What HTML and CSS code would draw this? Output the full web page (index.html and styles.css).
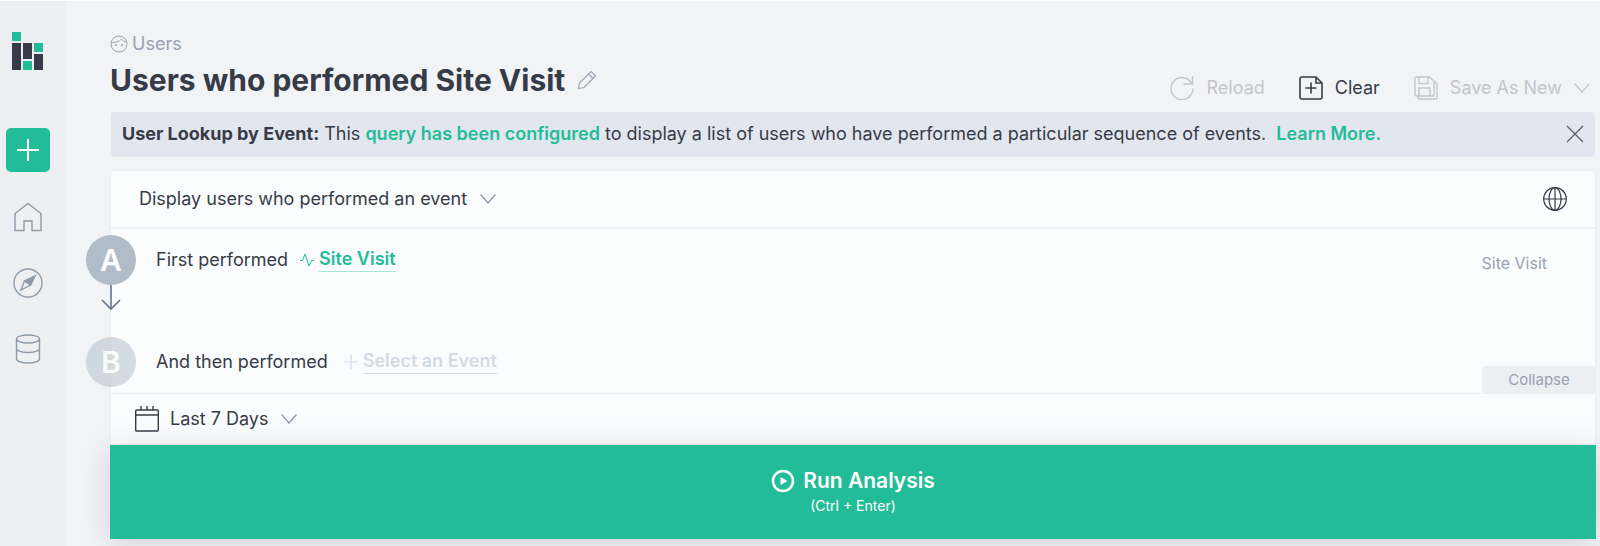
FILE: index.html
```html
<!DOCTYPE html>
<html lang="en">
<head>
  <meta charset="UTF-8">
  <meta name="viewport" content="width=device-width, initial-scale=1">
  <title>Users who performed Site Visit</title>
  <link rel="stylesheet" href="styles.css">
</head>
<body>
  <div class="app">
    <nav class="sidebar" aria-label="Main">
      <a class="logo" href="#" aria-label="Dashboard">
        <svg width="32" height="38" viewBox="0 0 32 38">
          <g fill="#22bd98">
            <rect x="0" y="0" width="9" height="9"/>
            <rect x="22" y="11" width="9" height="9"/>
            <rect x="11" y="29" width="9" height="9"/>
          </g>
          <g fill="#373b47">
            <rect x="0" y="11" width="9" height="27"/>
            <rect x="11" y="11" width="9" height="16"/>
            <rect x="22" y="22" width="9" height="16"/>
          </g>
        </svg>
      </a>
      <button class="add-btn" type="button" aria-label="New query">
        <svg width="22" height="22" viewBox="0 0 22 22" fill="none" stroke="#fff" stroke-width="2"><path d="M11 0v22M0 11h22"/></svg>
      </button>
      <a class="nav-link" href="#" aria-label="Home">
        <svg width="30" height="30" viewBox="0 0 30 30" fill="none" stroke="#8f9bab" stroke-width="1.4"><path d="M2 11.500 15 1.500l13 10V28.500h-9V19h-8v9.500H2z"/></svg>
      </a>
      <a class="nav-link" href="#" aria-label="Explore">
        <svg width="30" height="30" viewBox="0 0 30 30" fill="none" stroke="#8f9bab" stroke-width="1.4">
          <circle cx="15" cy="15" r="14"/>
          <path d="M22 8l-4.500 9L8 22l3.500-9z"/>
          <path d="M22 8l-4.500 9-6-4z" fill="#8f9bab"/>
        </svg>
      </a>
      <a class="nav-link" href="#" aria-label="Data">
        <svg width="30" height="30" viewBox="0 0 30 30" fill="none" stroke="#8f9bab" stroke-width="1.4">
          <ellipse cx="15" cy="5" rx="11.500" ry="4"/>
          <path d="M3.500 5v20c0 2.200 5 4 11.500 4s11.500-1.800 11.500-4V5M3.500 14.500c0 2.200 5 4 11.500 4s11.500-1.800 11.500-4"/>
        </svg>
      </a>
    </nav>

    <main class="main">
      <header class="page-header">
        <div class="heading">
          <a class="breadcrumb" href="#">
            <svg width="18" height="18" viewBox="0 0 18 18" fill="none" stroke="#98a2b3">
              <circle cx="9" cy="9" r="8"/>
              <path d="M1.500 7C5 8 9 7 11.500 4c1 1.800 3 2.800 5 3"/>
              <circle cx="6" cy="10" r=".6" fill="#98a2b3"/>
              <circle cx="12" cy="10" r=".6" fill="#98a2b3"/>
            </svg>
            Users
          </a>
          <div class="title-row">
            <h1>Users who performed Site Visit</h1>
            <button class="icon-btn" type="button" aria-label="Rename">
              <svg width="20" height="20" viewBox="0 0 20 20" fill="none" stroke="#98a2b3" stroke-width="1.2"><path d="M1.500 18.500l1-5.500L14 1.500l4.500 4.500L7 17.500zM11.500 4l4.500 4.500"/></svg>
            </button>
          </div>
        </div>
        <div class="actions">
          <button class="action" type="button" disabled>
            <svg width="24" height="24" viewBox="0 0 24 24" fill="none" stroke="currentColor" stroke-width="1.4"><path d="M22.500 0v8h-9M22 8A11 11 0 1 0 23 12.500"/></svg>
            Reload
          </button>
          <button class="action" type="button">
            <svg width="24" height="24" viewBox="0 0 24 24" fill="none" stroke="currentColor" stroke-width="1.6"><path d="M17 1H3a2 2 0 0 0-2 2v18a2 2 0 0 0 2 2h18a2 2 0 0 0 2-2V7zM17 1v6h6M12 6.500v11M6.500 12h11"/></svg>
            Clear
          </button>
          <button class="action save" type="button" disabled>
            <svg width="24" height="24" viewBox="0 0 24 24" fill="none" stroke="currentColor" stroke-width="1.4"><path d="M15.500 1H2.500A1.500 1.500 0 0 0 1 2.500v16A1.500 1.500 0 0 0 2.500 20h16a1.500 1.500 0 0 0 1.500-1.500V5zM5 1v6.500h9V1M5 20v-8h11v8M4 20v1.500A1.500 1.500 0 0 0 5.500 23h16a1.500 1.500 0 0 0 1.500-1.500V8l-3-3"/></svg>
            Save As New
            <svg class="chevron" width="16" height="10" viewBox="0 0 16 10" fill="none" stroke="currentColor" stroke-width="1.2"><path d="M.5.5 8 9 15.500.5"/></svg>
          </button>
        </div>
      </header>

      <section class="banner">
        <p><strong>User Lookup by Event:</strong> This <a href="#">query has been configured</a> to display a list of users who have performed a particular sequence of events.&nbsp; <a href="#">Learn More.</a></p>
        <button class="icon-btn" type="button" aria-label="Dismiss">
          <svg width="18" height="18" viewBox="0 0 18 18" fill="none" stroke="#5b616e" stroke-width="1.3"><path d="M1 1l16 16M17 1L1 17"/></svg>
        </button>
      </section>

      <section class="query">
        <div class="query-top">
          <label class="dropdown">
            <select aria-label="Query type">
              <option>Display users who performed an event</option>
            </select>
            <svg class="chevron" width="16" height="10" viewBox="0 0 16 10" fill="none" stroke="#8f9bab" stroke-width="1.4"><path d="M.5.5 8 9 15.500.5"/></svg>
          </label>
          <button class="icon-btn" type="button" aria-label="Time zone">
            <svg width="24" height="24" viewBox="0 0 24 24" fill="none" stroke="#373b47" stroke-width="1.2"><circle cx="12" cy="12" r="11.300"/><ellipse cx="12" cy="12" rx="6" ry="11.300"/><path d="M12 .7v22.600M.7 12h22.600"/></svg>
          </button>
        </div>

        <div class="steps">
          <div class="step">
            <div class="marker">
              <span class="badge">A</span>
              <svg width="20" height="26" viewBox="0 0 20 26" fill="none" stroke="#66758a" stroke-width="1.6"><path d="M10 0v24M1 15l9 9 9-9"/></svg>
            </div>
            <div class="step-body">
              <span>First performed</span>
              <button class="event" type="button">
                <svg width="14" height="14" viewBox="0 0 14 14" fill="none" stroke="#22bd98"><path d="M0 7.500h2.500L5 1l4 12 2.500-5.500H14"/></svg>
                <span class="event-name">Site Visit</span>
              </button>
            </div>
            <span class="step-note">Site Visit</span>
          </div>
          <div class="step">
            <div class="marker">
              <span class="badge next">B</span>
            </div>
            <div class="step-body wide">
              <span>And then performed</span>
              <button class="event empty" type="button">
                <svg width="14" height="14" viewBox="0 0 14 14" fill="none" stroke="#d3dae4" stroke-width="1.2"><path d="M7 0v14M0 7h14"/></svg>
                <span class="event-name">Select an Event</span>
              </button>
            </div>
          </div>
          <button class="collapse" type="button">Collapse</button>
        </div>

        <div class="date-row">
          <svg width="24" height="26" viewBox="0 0 24 26" fill="none" stroke="#373b47" stroke-width="1.4"><rect x=".7" y="4" width="22.600" height="21" rx="1"/><path d="M.7 9h22.600M6 0v4M12 0v4M18 0v4"/></svg>
          <label class="dropdown">
            <select aria-label="Date range">
              <option>Last 7 Days</option>
            </select>
            <svg class="chevron" width="16" height="10" viewBox="0 0 16 10" fill="none" stroke="#8f9bab" stroke-width="1.4"><path d="M.5.5 8 9 15.500.5"/></svg>
          </label>
        </div>
      </section>

      <button class="run" type="button">
        <span class="run-label">
          <svg width="24" height="24" viewBox="0 0 24 24" fill="none"><circle cx="12" cy="12" r="10" stroke="#fff" stroke-width="2.500"/><path d="M9.500 8l7 4-7 4z" fill="#fff"/></svg>
          Run Analysis
        </span>
        <span class="run-hint">(Ctrl + Enter)</span>
      </button>
    </main>
  </div>
</body>
</html>
```
FILE: styles.css
```css
* {
  box-sizing: border-box;
}

body {
  margin: 0;
  background: #f2f3f7;
  color: #373b47;
  font: 18px/24px Inter, "Liberation Sans", sans-serif;
}

h1,
p {
  margin: 0;
}

svg {
  display: block;
  flex: none;
}

button,
select {
  margin: 0;
  padding: 0;
  border: 0;
  background: none;
  color: inherit;
  font: inherit;
  cursor: pointer;
}

a {
  color: #22bd98;
  text-decoration: none;
}

.app {
  display: flex;
  min-height: 100vh;
  border-top: 1px solid #fff;
  overflow: hidden;
}

/* Sidebar */
.sidebar {
  display: flex;
  flex-direction: column;
  align-items: center;
  flex: none;
  width: 66px;
  padding: 31px 11px 0 0;
  background: #edeff3;
}

.add-btn {
  display: flex;
  align-items: center;
  justify-content: center;
  width: 44px;
  height: 44px;
  margin-top: 58px;
  border-radius: 5px;
  background: #22bd98;
}

.nav-link {
  margin-top: 36px;
}

.add-btn + .nav-link {
  margin-top: 30px;
}

/* Header */
.main {
  display: flex;
  flex-direction: column;
  flex: 1;
  min-width: 0;
  padding: 31px 4px 7px 44px;
}

.page-header {
  display: flex;
  align-items: flex-end;
  justify-content: space-between;
  padding: 0 6px 12px 0;
}

.breadcrumb {
  display: flex;
  align-items: center;
  gap: 4px;
  color: #98a2b3;
}

.title-row {
  display: flex;
  align-items: center;
  gap: 12px;
  margin-top: 4px;
}

h1 {
  font-size: 30px;
  font-weight: 700;
  line-height: 40px;
}

.actions {
  display: flex;
  gap: 34px;
}

.action {
  display: flex;
  align-items: center;
  gap: 12px;
}

.action:disabled {
  color: #c3c5ca;
  cursor: default;
}

/* Banner */
.banner {
  display: flex;
  align-items: center;
  justify-content: space-between;
  margin: 0 1px 13px;
  padding: 10px 11px 11px;
  border-radius: 4px;
  background: #e2e6ee;
}

.banner a {
  font-weight: 600;
}

/* Query builder */
.query {
  border: 1px solid #eceef2;
  border-radius: 4px;
  background: #fbfcfe;
}

.query-top {
  display: flex;
  align-items: center;
  justify-content: space-between;
  padding: 16px 28px;
  border-bottom: 2px solid #eff1f4;
}

.dropdown {
  display: flex;
  align-items: center;
  gap: 12px;
}

.dropdown select {
  appearance: none;
}

.steps {
  position: relative;
  display: grid;
  gap: 26px;
  padding: 6px 48px 6px 0;
  border-bottom: 1px solid #eceef2;
}

.step {
  display: flex;
  align-items: flex-start;
  gap: 20px;
  margin-left: -25px;
}

.marker {
  display: flex;
  flex-direction: column;
  align-items: center;
}

.badge {
  width: 50px;
  height: 50px;
  border-radius: 50%;
  background: #b0bcc8;
  color: #fff;
  font-size: 30px;
  font-weight: 600;
  line-height: 50px;
  text-align: center;
}

.badge.next {
  opacity: .5;
}

.step-body {
  display: flex;
  align-items: center;
  gap: 12px;
  padding: 12px 0;
}

.step-body.wide {
  gap: 16px;
}

.event {
  display: flex;
  align-items: center;
  gap: 5px;
  color: #22bd98;
  font-weight: 600;
}

.event-name {
  border-bottom: 1px solid #a5e4d4;
}

.event.empty {
  color: #d3dae4;
}

.empty .event-name {
  border-color: #d3dae4;
}

.step-note {
  margin-left: auto;
  padding-top: 16px;
  color: #98a2b3;
  font-size: 16px;
}

.collapse {
  position: absolute;
  right: -1px;
  bottom: 0;
  width: 114px;
  height: 27px;
  border-radius: 4px 4px 0 0;
  background: #eceef2;
  color: #98a2b3;
  font-size: 15px;
}

.date-row {
  display: flex;
  align-items: center;
  gap: 11px;
  padding: 12px 24px;
}

/* Run button */
.run {
  display: flex;
  flex-direction: column;
  align-items: center;
  padding: 22px 0;
  background: #22bd98;
  box-shadow: 0 4px 30px rgba(0, 0, 0, .14);
  color: #fff;
}

.run-label {
  display: flex;
  align-items: center;
  gap: 8px;
  font-size: 21px;
  font-weight: 600;
  line-height: 28px;
}

.run-hint {
  font-size: 14px;
  line-height: 22px;
}
```
